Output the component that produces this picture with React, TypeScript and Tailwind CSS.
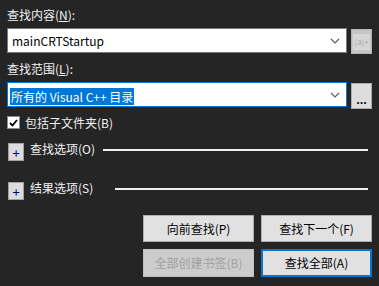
import React from "react";

const font = { fontFamily: '"Noto Sans CJK SC", "Noto Sans", sans-serif' };

function Chevron() {
  return (
    <svg width="10" height="6" viewBox="0 0 10 6" className="shrink-0">
      <path d="M1 1 L5 5 L9 1" fill="none" stroke="#606060" strokeWidth="1.2" />
    </svg>
  );
}

function Btn({
  label,
  disabled,
  focused,
}: {
  label: string;
  disabled?: boolean;
  focused?: boolean;
}) {
  return (
    <div
      className={`w-[111px] flex items-center justify-center text-[12px] ${
        disabled
          ? "bg-[#cccccc] border border-[#bfbfbf] text-[#a0a0a0]"
          : focused
          ? "bg-[#e1e1e1] border-2 border-[#0078d7] text-black"
          : "bg-[#e1e1e1] border border-[#adadad] text-black"
      }`}
    >
      {label}
    </div>
  );
}

function Expander({ label, lineFrom }: { label: string; lineFrom: number }) {
  return (
    <div className="flex items-center h-[18px] pl-[1px]">
      <div className="w-[16px] h-[18px] bg-[#dcdcdc] border border-[#a0a0a0] flex items-center justify-center text-[#000080] text-[13px] leading-none">
        +
      </div>
      <span className="ml-[6px] text-[12px] text-[#f1f1f1] -mt-[7px]">{label}</span>
      <div
        className="h-[2px] bg-[#f0f0f0] -mt-[5px]"
        style={{ marginLeft: lineFrom, width: 0, flex: 1, marginRight: 4 }}
      />
    </div>
  );
}

export default function App() {
  return (
    <div
      className="w-[379px] h-[286px] bg-[#252526] px-[7px] pt-[7px] overflow-hidden"
      style={font}
    >
      <div className="text-[12px] leading-[16px] text-[#f1f1f1]">
        查找内容(<span className="underline">N</span>):
      </div>
      <div className="flex mt-[5px] h-[25px]">
        <div className="w-[341px] bg-white border border-[#7a7a7a] flex items-center pl-[4px] pr-[6px]">
          <span className="flex-1 text-[12px] text-black">mainCRTStartup</span>
          <Chevron />
        </div>
        <div className="ml-[4px] w-[21px] h-[25px] mt-[1px] bg-[#c6c6c6] border border-[#b4b4b4] flex items-center justify-center">
          <div className="w-[17px] h-[16px] bg-[#d6d6d6] flex items-center justify-center text-[8px] leading-none text-[#a6a6a6] whitespace-nowrap">
            (a)+
          </div>
        </div>
      </div>
      <div className="text-[12px] leading-[16px] text-[#f1f1f1] mt-[8px]">
        查找范围(<span className="underline">L</span>):
      </div>
      <div className="flex mt-[5px] h-[25px]">
        <div className="w-[341px] bg-white border border-[#0078d7] flex items-center pl-[2px] pr-[6px]">
          <div className="flex-1">
            <span className="bg-[#0078d7] text-white text-[12px] px-[1px]">所有的 Visual C++ 目录</span>
          </div>
          <Chevron />
        </div>
        <div className="ml-[4px] w-[21px] h-[26px] mt-[1px] bg-[#dddddd] border border-[#adadad] flex items-end justify-center pb-[3px] text-[11px] leading-none text-black font-bold">
          ...
        </div>
      </div>
      <div className="flex items-center mt-[9px] h-[13px]">
        <div className="w-[13px] h-[13px] bg-white border border-[#8a8a8a] flex items-center justify-center">
          <svg width="9" height="8" viewBox="0 0 9 8">
            <path d="M1 4 L3.5 6.5 L8 1" fill="none" stroke="#000" strokeWidth="1.8" />
          </svg>
        </div>
        <span className="ml-[5px] text-[12px] text-[#f1f1f1]">包括子文件夹(B)</span>
      </div>
      <div className="mt-[14px]">
        <Expander label="查找选项(O)" lineFrom={8} />
      </div>
      <div className="mt-[21px]">
        <Expander label="结果选项(S)" lineFrom={22} />
      </div>
      <div className="flex flex-col items-end mt-[15px]">
        <div className="flex gap-[7px] h-[27px]">
          <Btn label="向前查找(P)" />
          <Btn label="查找下一个(F)" />
        </div>
        <div className="flex gap-[7px] h-[28px] mt-[7px]">
          <Btn label="全部创建书签(B)" disabled />
          <Btn label="查找全部(A)" focused />
        </div>
      </div>
    </div>
  );
}
